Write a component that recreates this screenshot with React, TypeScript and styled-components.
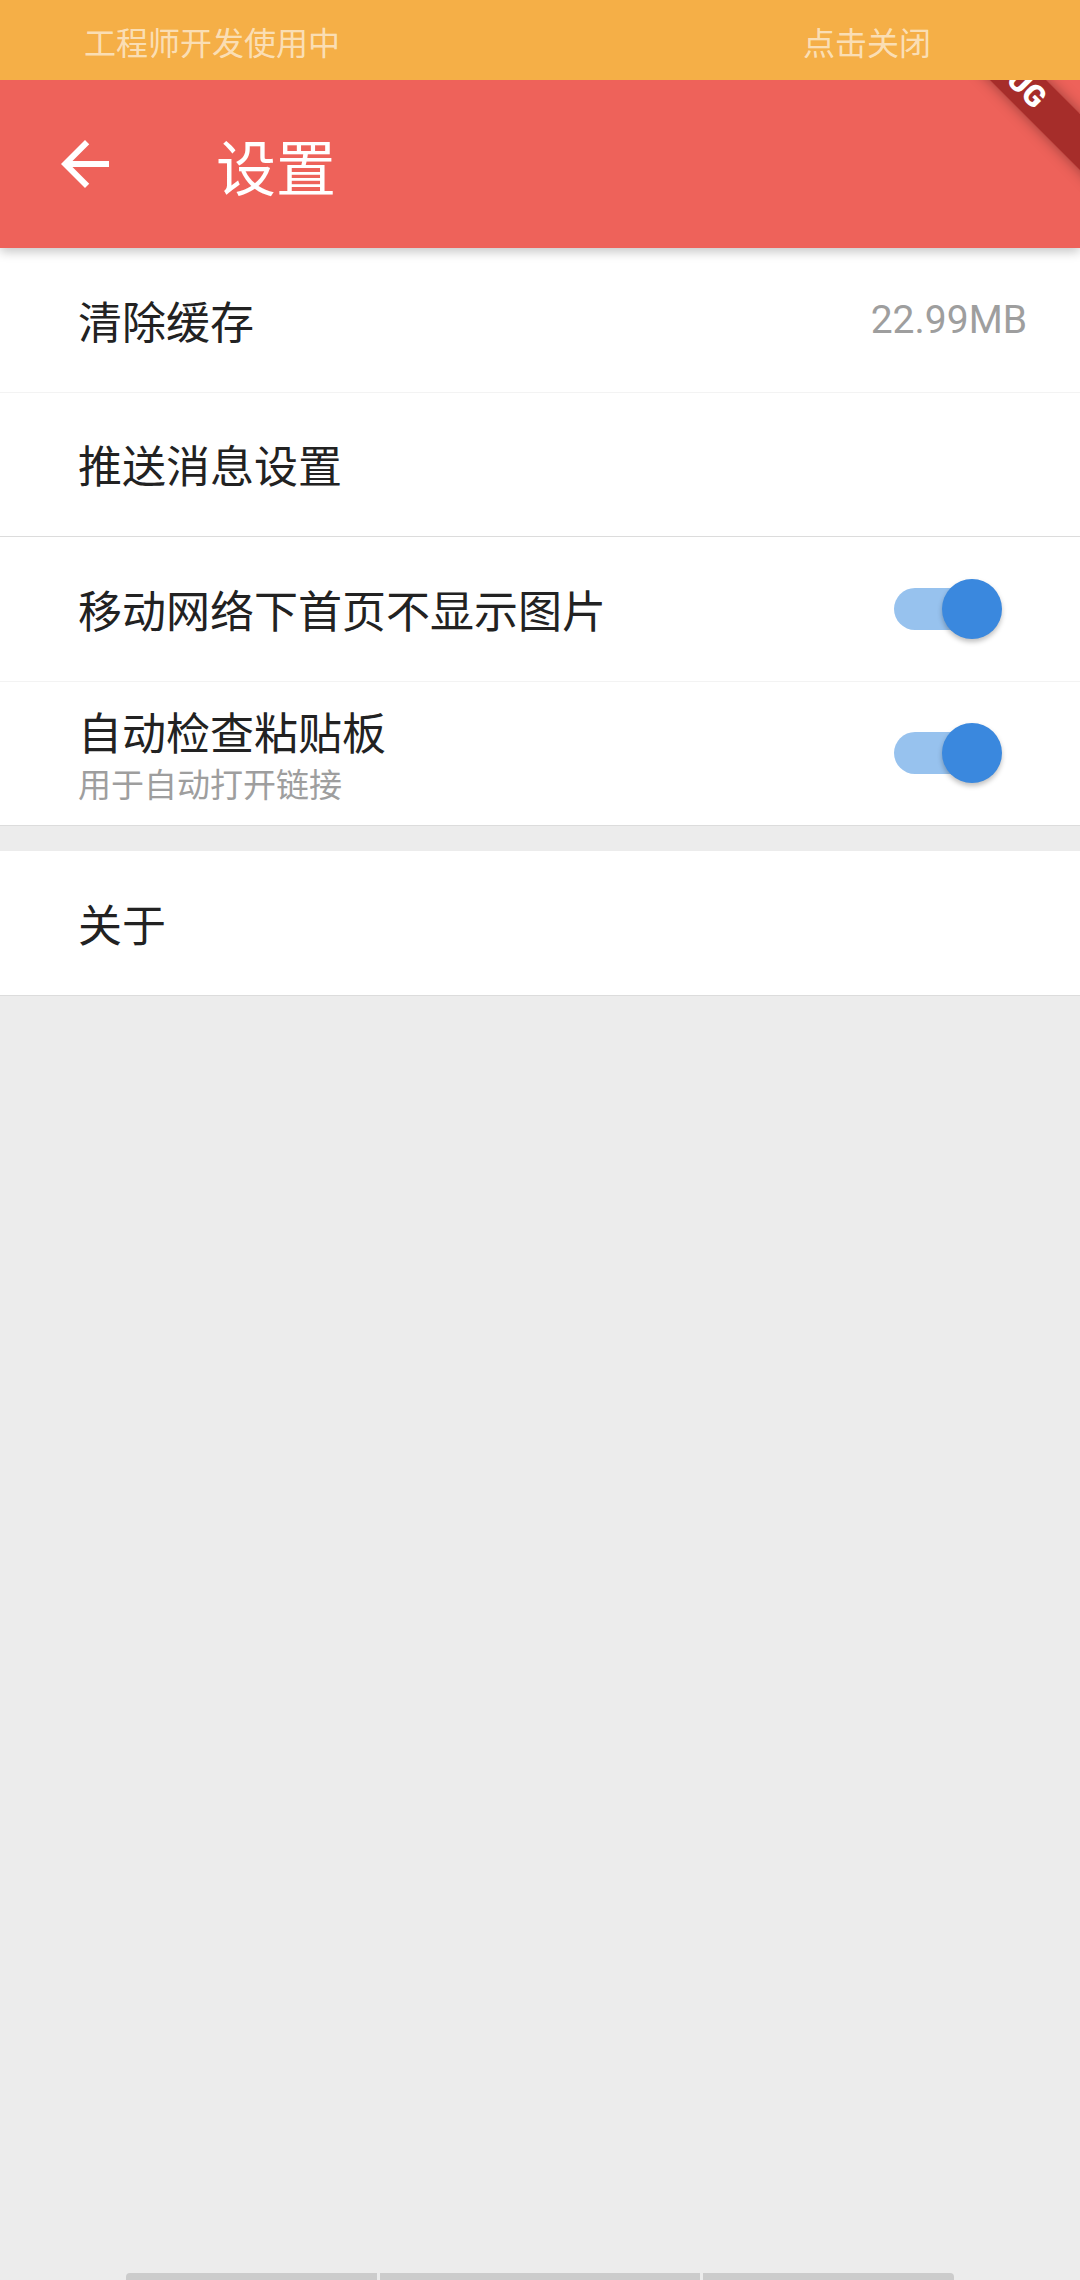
import React from "react";
import styled, { createGlobalStyle } from "styled-components";

const GlobalStyle = createGlobalStyle`
  html, body {
    margin: 0;
    padding: 0;
    background: #ececec;
  }
  * {
    box-sizing: border-box;
  }
`;

const CJK = `"Noto Sans CJK SC", "Noto Sans", sans-serif`;

type Item = {
  title: string;
  subtitle?: string;
  value?: string;
  toggle?: boolean;
  strong?: boolean;
};

const group: Item[] = [
  { title: "清除缓存", value: "22.99MB" },
  { title: "推送消息设置", strong: true },
  { title: "移动网络下首页不显示图片", toggle: true },
  { title: "自动检查粘贴板", subtitle: "用于自动打开链接", toggle: true, strong: true },
];

export default function App() {
  return (
    <>
      <GlobalStyle />
      <Page>
        <DevBar>
          <DevText>工程师开发使用中</DevText>
          <DevText>点击关闭</DevText>
        </DevBar>

        <DebugRibbon>DEBUG</DebugRibbon>

        <AppBar>
          <BackButton aria-label="back">
            <svg width="72" height="72" viewBox="0 0 24 24">
              <path
                fill="#fff"
                d="M20 11H7.83l5.59-5.59L12 4l-8 8 8 8 1.41-1.41L7.83 13H20v-2z"
              />
            </svg>
          </BackButton>
          <Title>设置</Title>
        </AppBar>

        <Section>
          {group.map((item) => (
            <Row key={item.title} $strong={item.strong}>
              <Texts>
                <RowTitle $tight={!!item.subtitle}>{item.title}</RowTitle>
                {item.subtitle && <RowSub>{item.subtitle}</RowSub>}
              </Texts>
              {item.value && <Value>{item.value}</Value>}
              {item.toggle && (
                <Track>
                  <Thumb />
                </Track>
              )}
            </Row>
          ))}
        </Section>

        <Section $gap>
          <Row $strong>
            <Texts>
              <RowTitle>关于</RowTitle>
            </Texts>
          </Row>
        </Section>

        <BottomBars>
          <Bar $w={251} $side="left" />
          <Bar $w={320} />
          <Bar $w={251} $side="right" />
        </BottomBars>
      </Page>
    </>
  );
}

const Page = styled.div`
  position: relative;
  width: 1080px;
  height: 2280px;
  overflow: hidden;
  display: flex;
  flex-direction: column;
  background: #ececec;
`;

const DevBar = styled.div`
  position: relative;
  z-index: 3;
  height: 80px;
  display: flex;
  align-items: center;
  justify-content: space-between;
  padding: 2px 149px 0 84px;
  background: #f5af47;
`;

const DevText = styled.span`
  font-family: ${CJK};
  font-size: 32px;
  color: rgba(255, 255, 255, 0.62);
`;

const DebugRibbon = styled.div`
  position: absolute;
  z-index: 2;
  left: 827px;
  top: 49px;
  width: 360px;
  height: 40px;
  transform: rotate(45deg);
  background: rgba(160, 40, 38, 0.92);
  box-shadow: 0 0 14px rgba(0, 0, 0, 0.35);
  color: #fff;
  font-family: Roboto, "Liberation Sans", sans-serif;
  font-weight: 900;
  font-size: 30px;
  line-height: 40px;
  text-align: center;
`;

const AppBar = styled.header`
  position: relative;
  z-index: 1;
  height: 168px;
  display: flex;
  align-items: center;
  background: #ee625a;
  box-shadow: 0 4px 10px rgba(0, 0, 0, 0.22);
`;

const BackButton = styled.div`
  width: 168px;
  height: 168px;
  display: flex;
  align-items: center;
  justify-content: center;
  padding-left: 2px;
`;

const Title = styled.h1`
  margin: 0 0 0 48px;
  font-family: ${CJK};
  font-weight: 400;
  font-size: 60px;
  color: #fff;
`;

const Section = styled.div<{ $gap?: boolean }>`
  background: #fff;
  margin-top: ${(p) => (p.$gap ? "25px" : "0")};
`;

const Row = styled.div<{ $strong?: boolean }>`
  height: 144.5px;
  display: flex;
  align-items: center;
  padding: 0 53px 0 78px;
  border-bottom: 1px solid ${(p) => (p.$strong ? "#dcdcdc" : "#f3f3f3")};
`;

const Texts = styled.div`
  flex: 1;
  display: flex;
  flex-direction: column;
`;

const RowTitle = styled.span<{ $tight?: boolean }>`
  font-family: ${CJK};
  font-size: 44px;
  line-height: ${(p) => (p.$tight ? "64px" : "52px")};
  color: #222;
`;

const RowSub = styled.span`
  font-family: ${CJK};
  font-size: 33px;
  line-height: 48px;
  margin-top: -4px;
  color: #9e9e9e;
`;

const Value = styled.span`
  font-family: Roboto, "Liberation Sans", sans-serif;
  font-size: 39px;
  color: #9e9e9e;
`;

const Track = styled.div`
  position: relative;
  width: 99px;
  height: 42px;
  margin-right: 34px;
  border-radius: 21px;
  background: #97c2ee;
`;

const Thumb = styled.div`
  position: absolute;
  right: -9px;
  top: -9px;
  width: 60px;
  height: 60px;
  border-radius: 50%;
  background: #3a88de;
  box-shadow: 0 3px 5px rgba(0, 0, 0, 0.25);
`;

const BottomBars = styled.div`
  margin-top: auto;
  height: 7px;
  display: flex;
  gap: 3px;
  padding-left: 126px;
`;

const Bar = styled.div<{ $w: number; $side?: "left" | "right" }>`
  width: ${(p) => p.$w}px;
  height: 7px;
  background: #cccccc;
  border-radius: ${(p) =>
    p.$side === "left" ? "4px 0 0 0" : p.$side === "right" ? "0 4px 0 0" : "0"};
`;
